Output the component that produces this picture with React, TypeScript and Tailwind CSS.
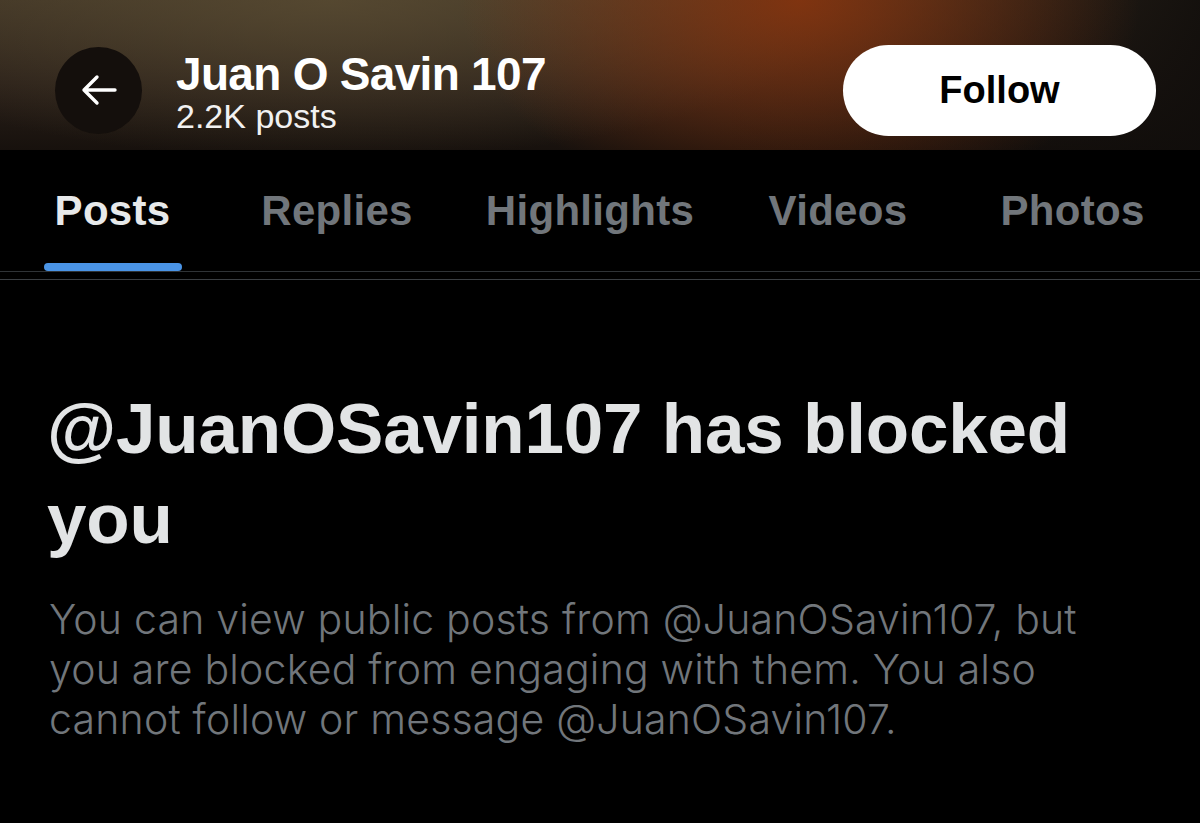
import React from "react";

function BackArrow() {
  return (
    <svg width="36" height="32" viewBox="0 0 36 32" fill="none">
      <path
        d="M16 3 L3 16 L16 29 M3 16 H34"
        stroke="#ffffff"
        strokeWidth="3.4"
        strokeLinecap="round"
        strokeLinejoin="round"
      />
    </svg>
  );
}

const tabs = [
  { label: "Posts", w: "w-[225px]", active: true },
  { label: "Replies", w: "w-[224px]", active: false },
  { label: "Highlights", w: "w-[282px]", active: false },
  { label: "Videos", w: "w-[214px]", active: false },
  { label: "Photos", w: "w-[255px]", active: false },
];

export default function App() {
  return (
    <div className="w-[1200px] h-[823px] overflow-hidden bg-black font-['Liberation_Sans',Arial,sans-serif]">
      {/* Header */}
      <header className="h-[150px] pt-[30px] flex items-center pl-[55px] pr-[44px] bg-[radial-gradient(ellipse_340px_210px_at_800px_0px,rgba(135,52,14,0.9),rgba(135,52,14,0)),radial-gradient(ellipse_520px_160px_at_330px_0px,rgba(92,78,52,0.75),rgba(92,78,52,0)),linear-gradient(to_right,rgba(18,14,12,0)_0%,rgba(18,14,12,0)_60%,rgba(16,13,11,0.9)_100%),linear-gradient(to_bottom,#3f3425_0%,#2a2019_55%,#17110d_100%)]">
        <div className="w-[87px] h-[87px] shrink-0 rounded-full bg-[#140f0c] flex items-center justify-center">
          <BackArrow />
        </div>
        <div className="ml-[34px] mt-[3px] flex flex-col">
          <div className="text-white font-bold text-[46px] leading-[48px] tracking-[-0.7px]">
            Juan O Savin 107
          </div>
          <div className="text-[#f1f1f1] text-[34px] leading-[36px]">
            2.2K posts
          </div>
        </div>
        <button className="ml-auto w-[313px] h-[91px] rounded-full bg-white text-black font-bold text-[38px] flex items-center justify-center">
          Follow
        </button>
      </header>

      {/* Tabs */}
      <nav className="h-[121px] flex">
        {tabs.map((t) => (
          <div
            key={t.label}
            className={`${t.w} relative h-full flex items-center justify-center`}
          >
            <span
              className={`text-[42px] font-bold tracking-[0.3px] ${
                t.active ? "text-[#e7e9ea]" : "text-[#71767b]"
              }`}
            >
              {t.label}
            </span>
            {t.active && (
              <div className="absolute bottom-0 left-[44px] w-[138px] h-[8px] rounded-full bg-[#4a94e6]" />
            )}
          </div>
        ))}
      </nav>
      <div className="h-px bg-[#2f3336]" />
      <div className="h-[7px]" />
      <div className="h-px bg-[#3a3e42]" />

      {/* Content */}
      <main className="pt-[104px] pl-[47px] pr-[50px]">
        <h1 className="text-[#e2e4e5] font-bold text-[71px] leading-[90px] tracking-[-0.2px]">
          @JuanOSavin107 has blocked you
        </h1>
        <p className="mt-[30px] max-w-[1080px] pl-[2px] text-[#71767b] text-[41px] leading-[50px] tracking-[0.2px] font-['Inter',sans-serif] font-light">
          You can view public posts from @JuanOSavin107, but you are blocked
          from engaging with them. You also cannot follow or message
          @JuanOSavin107.
        </p>
      </main>
    </div>
  );
}
